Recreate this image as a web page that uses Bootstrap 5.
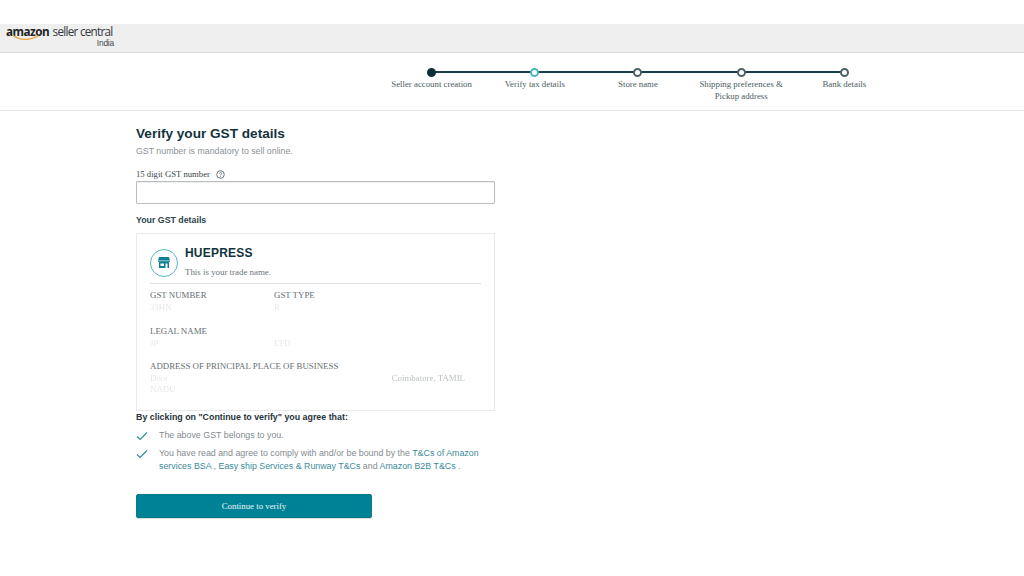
<!DOCTYPE html>
<html lang="en">
<head>
<meta charset="utf-8">
<title>Verify your GST details</title>
<link rel="stylesheet" href="https://cdn.jsdelivr.net/npm/bootstrap@5.3.0/dist/css/bootstrap.min.css">
<style>
html,body{height:576px;overflow:hidden}
body{background:#fff;font-family:"Liberation Sans",Arial,sans-serif;color:#0f2f3a}
.top-gap{height:24px}
.brand-bar{height:29px;background:#efefef;border-bottom:1px solid #dcdcdc;padding-left:6px}
.logo-wrap{width:108px;line-height:1;position:relative;color:#33383c;padding-top:1px}
.logo-main{font-family:"Open Sans",sans-serif;font-size:11.7px;letter-spacing:-.72px;white-space:nowrap;line-height:12px}
.logo-main b{color:#222;font-weight:700;letter-spacing:-.5px;margin-right:1px}
.logo-sub{font-family:"Liberation Sans",sans-serif;font-size:8.4px;letter-spacing:-.2px;text-align:right;line-height:9px;margin-top:2px;color:#44484b}
.logo-smile{position:absolute;left:6px;top:10px;width:28px;height:8px}
.stepper-bar{height:58px;border-bottom:1px solid #e6e6e6;padding-left:380px}
.step-item{width:103.2px;position:relative;text-align:center;padding-top:15px;font-family:"Liberation Serif",serif;font-size:8.8px;line-height:12px;color:#4c5c62}
.step-item::before{content:"";position:absolute;top:18px;left:51px;width:103px;height:2px;background:#17414a}
.step-item:last-child::before{display:none}
.step-dot{width:9px;height:9px;border-radius:50%;border:2px solid #4c6369;background:#fff;position:relative;margin:0 auto 1px;z-index:1}
.step-dot.done{background:#0c2f38;border-color:#0c2f38}
.step-dot.now{border-color:#4bb5bd}
.step-wide{white-space:nowrap}
.form-col{width:359px;margin-left:136px;padding-top:15px}
.page-title{font-size:13.6px;font-weight:700;line-height:16px;color:#12333d;margin:0 0 3px}
.sub-note{font-size:8.8px;line-height:12px;color:#8a9296;margin:0 0 11px}
.field-label{font-family:"Liberation Serif",serif;font-size:8.7px;line-height:12px;color:#39474c;margin-bottom:1px;gap:6px}
.help-dot{width:9px;height:9px}
.gst-input{height:23px;border:1px solid #b9bfc1;border-radius:1px;box-shadow:inset 0 1px 1px #eee;padding:0;background:#fff}
.gst-input:focus{box-shadow:none;border-color:#b9bfc1}
.sec-head{font-size:8.8px;font-weight:700;line-height:12px;color:#2d444c;margin:10px 0 7px}
.trade-box{height:178px;border:1px solid #e9eaea;border-radius:0;padding:13px 13px 0}
.shop-ring{width:28px;height:28px;border:1px solid #55b9bf;border-radius:50%;margin-right:7px;flex:none}
.trade-name{font-size:12px;font-weight:700;line-height:13px;letter-spacing:.2px;color:#12333d;margin-bottom:6px}
.trade-note{font-family:"Liberation Serif",serif;font-size:8.9px;line-height:12px;color:#6d7579}
.trade-rule{border-top:1px solid #dcdfe0;margin:5px 0 5px;width:100%}
.info-lab{font-family:"Liberation Serif",serif;font-size:8.85px;line-height:12px;color:#666e72}
.info-val{font-family:"Liberation Serif",serif;font-size:8.85px;line-height:12px;color:#e6e8e8;filter:blur(.6px);height:23.5px}
.info-line{height:11px}
.gst-c1{width:124px}
.addr-far{color:#bcc1c3;filter:blur(.4px)}
.agree-head{font-size:8.85px;font-weight:700;line-height:12px;color:#26333a;margin:0 0 6px}
.agree-row{font-size:8.85px;line-height:13px;color:#858c90;gap:11px;margin-bottom:5px}
.tick{width:12px;height:10px;flex:none;margin-top:2px}
.agree-row a{color:#3b8c99;text-decoration:none}
.verify-btn{width:236px;height:24px;padding:0;margin-top:21px;background:#008296;border:1px solid #0a7a8b;border-radius:2px;color:#eaf6f7;font-family:"Liberation Serif",serif;font-size:8.8px;line-height:22px;box-shadow:0 1px 1px rgba(0,0,0,.15)}
.verify-btn:hover{background:#008296;color:#eaf6f7}
</style>
</head>
<body>
<div class="top-gap"></div>
<header class="brand-bar">
  <div class="logo-wrap">
    <div class="logo-main"><b>amazon</b> seller central</div>
    <div class="logo-sub">India</div>
    <svg class="logo-smile" viewBox="0 0 28 8" aria-hidden="true"><path d="M1 1.5C8 6.5 18 6.5 26 2" fill="none" stroke="#e8a33d" stroke-width="1.3" stroke-linecap="round"/></svg>
  </div>
</header>
<nav class="stepper-bar d-flex align-items-start">
  <div class="step-item"><div class="step-dot done"></div><span class="step-wide">Seller account creation</span></div>
  <div class="step-item"><div class="step-dot now"></div>Verify tax details</div>
  <div class="step-item"><div class="step-dot"></div>Store name</div>
  <div class="step-item"><div class="step-dot"></div><span class="step-wide">Shipping preferences &amp;</span><br>Pickup address</div>
  <div class="step-item"><div class="step-dot"></div>Bank details</div>
</nav>
<main class="form-col">
  <h1 class="page-title">Verify your GST details</h1>
  <p class="sub-note">GST number is mandatory to sell online.</p>
  <div class="field-label d-flex align-items-center">15 digit GST number
    <svg class="help-dot" viewBox="0 0 10 10" aria-hidden="true"><circle cx="5" cy="5" r="4.2" fill="none" stroke="#4c5a60" stroke-width=".9"/><path d="M3.7 4C3.8 2.4 6.4 2.5 6.3 4C6.2 5 5 5 5 6" fill="none" stroke="#4c5a60" stroke-width=".8"/><circle cx="5" cy="7.3" r=".5" fill="#4c5a60"/></svg>
  </div>
  <input type="text" class="form-control gst-input" aria-label="15 digit GST number">
  <div class="sec-head">Your GST details</div>
  <section class="card trade-box">
    <div class="d-flex align-items-center">
      <div class="shop-ring d-flex align-items-center justify-content-center">
        <svg width="12" height="11" viewBox="0 0 12 11" aria-hidden="true"><path d="M1 0H11L12 3.5V5H11V11H1V5H0V3.5Z" fill="#0f7f90"/><path d="M2.5 6.5H6V9H2.5Z" fill="#fff"/><path d="M7.5 6.5H9.5V11H7.5Z" fill="#fff"/><path d="M0 3.8H12" stroke="#fff" stroke-width=".6"/></svg>
      </div>
      <div>
        <div class="trade-name">HUEPRESS</div>
        <div class="trade-note">This is your trade name.</div>
      </div>
    </div>
    <div class="trade-rule"></div>
    <div class="d-flex">
      <div class="gst-c1"><div class="info-lab">GST NUMBER</div><div class="info-val">33HN</div></div>
      <div><div class="info-lab">GST TYPE</div><div class="info-val">R</div></div>
    </div>
    <div class="d-flex">
      <div class="gst-c1"><div class="info-lab">LEGAL NAME</div><div class="info-val">JP</div></div>
      <div><div class="info-lab">&nbsp;</div><div class="info-val">LTD</div></div>
    </div>
    <div class="info-lab">ADDRESS OF PRINCIPAL PLACE OF BUSINESS</div>
    <div class="info-val info-line d-flex justify-content-between pe-3"><span>Door</span><span class="addr-far">Coimbatore, TAMIL</span></div>
    <div class="info-val">NADU</div>
  </section>
  <div class="agree-head">By clicking on "Continue to verify" you agree that:</div>
  <div class="agree-row d-flex">
    <svg class="tick" viewBox="0 0 12 10" aria-hidden="true"><path d="M1 5.5L4.2 8.5L11 1.5" fill="none" stroke="#2f8f97" stroke-width="1.2"/></svg>
    <div>The above GST belongs to you.</div>
  </div>
  <div class="agree-row d-flex">
    <svg class="tick" viewBox="0 0 12 10" aria-hidden="true"><path d="M1 5.5L4.2 8.5L11 1.5" fill="none" stroke="#2f8f97" stroke-width="1.2"/></svg>
    <div>You have read and agree to comply with and/or be bound by the <a href="#">T&amp;Cs of Amazon</a> <a href="#">services BSA</a> , <a href="#">Easy ship Services &amp; Runway T&amp;Cs</a> and <a href="#">Amazon B2B T&amp;Cs</a> .</div>
  </div>
  <button type="button" class="btn verify-btn d-block">Continue to verify</button>
</main>
<script src="https://cdn.jsdelivr.net/npm/bootstrap@5.3.0/dist/js/bootstrap.bundle.min.js"></script>
</body>
</html>
